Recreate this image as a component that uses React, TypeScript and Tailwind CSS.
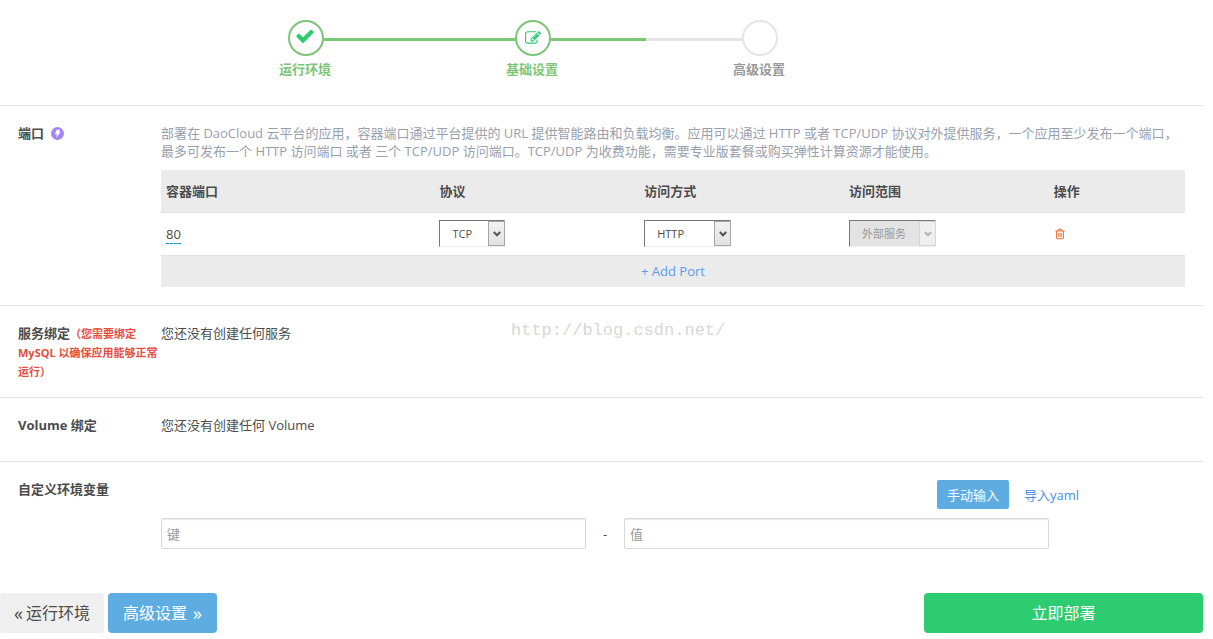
import { useState } from "react";
import clsx from "clsx";

const CHECK =
  "M1671 566q0 40-28 68l-724 724-136 136q-28 28-68 28t-68-28l-136-136-362-362q-28-28-28-68t28-68l136-136q28-28 68-28t68 28l294 295 656-657q28-28 68-28t68 28l136 136q28 28 28 68z";
const EDIT =
  "M888 1184l116-116-152-152-116 116v56h96v96h56zm440-720q-16-16-33 1l-350 350q-17 17-1 33t33-1l350-350q17-17 1-33zm80 594v190q0 119-84.5 203.5t-203.5 84.5h-832q-119 0-203.5-84.5t-84.5-203.5v-832q0-119 84.5-203.5t203.5-84.5h832q63 0 117 25 15 7 18 23 3 17-9 29l-49 49q-14 14-32 8-23-6-45-6h-832q-66 0-113 47t-47 113v832q0 66 47 113t113 47h832q66 0 113-47t47-113v-126q0-13 9-22l64-64q15-15 35-7t20 29zm-96-738l288 288-672 672h-288v-288zm444 132l-92 92-288-288 92-92q28-28 68-28t68 28l152 152q28 28 28 68t-28 68z";
const TRASH =
  "M704 736v576q0 14-9 23t-23 9h-64q-14 0-23-9t-9-23v-576q0-14 9-23t23-9h64q14 0 23 9t9 23zm256 0v576q0 14-9 23t-23 9h-64q-14 0-23-9t-9-23v-576q0-14 9-23t23-9h64q14 0 23 9t9 23zm256 0v576q0 14-9 23t-23 9h-64q-14 0-23-9t-9-23v-576q0-14 9-23t23-9h64q14 0 23 9t9 23zm128 724v-948h-896v948q0 22 7 40.5t14.5 27 10.5 8.5h832q3 0 10.5-8.5t14.5-27 7-40.5zm-672-1076h448l-48-117q-7-9-17-11h-317q-10 2-17 11zm928 32v64q0 14-9 23t-23 9h-96v948q0 83-47 143.5t-113 60.5h-832q-66 0-113-58.5t-47-141.5v-952h-96q-14 0-23-9t-9-23v-64q0-14 9-23t23-9h309l70-167q15-37 54-63t79-26h320q40 0 79 26t54 63l70 167h309q14 0 23 9t9 23z";

function Icon({ path, className }: { path: string; className: string }) {
  return (
    <svg viewBox="0 0 1792 1792" fill="currentColor" className={className} aria-hidden="true">
      <path d={path} />
    </svg>
  );
}

const steps = [
  { name: "运行环境", icon: CHECK, iconClass: "size-5 mb-1 mr-0.5", reached: true },
  { name: "基础设置", icon: EDIT, iconClass: "size-4", reached: true },
  { name: "高级设置", icon: null, iconClass: "", reached: false },
];

function Steps() {
  return (
    <ol className="ml-[16%] flex w-full max-w-[681px] pt-5 pb-[27px]">
      {steps.map((step, i) => {
        const line = step.reached ? "bg-[#7cc576]" : "bg-[#e5e5e5]";
        return (
          <li key={step.name} className="flex-1">
            <div className="flex items-start">
              <span className={clsx("mt-[18px] h-[3px] flex-1", i > 0 && line)} />
              <span
                className={clsx(
                  "flex size-9 items-center justify-center rounded-full border-2 text-[#2ecc71]",
                  step.reached ? "border-[#7cc576]" : "border-[#e5e5e5]"
                )}
              >
                {step.icon && <Icon path={step.icon} className={step.iconClass} />}
              </span>
              <span
                className={clsx("mt-[18px] h-[3px] flex-1", i < steps.length - 1 && line)}
              />
            </div>
            <p
              className={clsx(
                "mt-1 pr-0.5 text-center font-bold",
                step.reached ? "text-[#7cc576]" : "text-[#999]"
              )}
            >
              {step.name}
            </p>
          </li>
        );
      })}
    </ol>
  );
}

function Section({ label, children }: { label: React.ReactNode; children?: React.ReactNode }) {
  return (
    <section className="flex min-h-16 border-t border-[#e6e6e9] px-[18px] pt-[18px] pb-4">
      <h2 className="w-[143px] shrink-0 font-bold">{label}</h2>
      <div className="min-w-0 flex-1">{children}</div>
    </section>
  );
}

function Picker({
  label,
  options,
  className,
  disabled,
}: {
  label: string;
  options: string[];
  className: string;
  disabled?: boolean;
}) {
  return (
    <div className={clsx("relative h-[27px]", className)}>
      <select
        aria-label={label}
        disabled={disabled}
        className={clsx(
          "size-full appearance-none border border-t-[#777] border-r-[#eee] border-b-[#eee] border-l-[#777] pl-3 text-[11px]",
          disabled ? "bg-[#e3e3e3] text-[#999]" : "bg-white"
        )}
      >
        {options.map((o) => (
          <option key={o}>{o}</option>
        ))}
      </select>
      <span
        className={clsx(
          "pointer-events-none absolute top-px right-0 bottom-px flex w-[17px] items-center justify-center border",
          disabled
            ? "border-[#d5d5d5] bg-[#efefef] text-[#b5b5b5]"
            : "border-[#a5a5a5] bg-linear-to-b from-[#f2f2f2] to-[#e2e2e2] text-[#555]"
        )}
      >
        <svg viewBox="0 0 8 6" className="h-[6px] w-2" fill="none" stroke="currentColor" strokeWidth="2">
          <path d="M0.8 1 L4 4.3 L7.2 1" />
        </svg>
      </span>
    </div>
  );
}

function PortTable() {
  return (
    <table className="mt-[10px] mb-0.5 w-full table-fixed border-collapse text-left">
      <thead>
        <tr className="h-[42px] border-b border-[#e1e1e1] bg-[#ebebeb]">
          <th className="w-[26.7%] px-[5px]">容器端口</th>
          <th className="w-[20%] px-[5px]">协议</th>
          <th className="w-[20%] px-[5px]">访问方式</th>
          <th className="w-[20%] px-[5px]">访问范围</th>
          <th className="px-[5px]">操作</th>
        </tr>
      </thead>
      <tbody>
        <tr className="h-[43px] border-b border-[#e1e1e1]">
          <td className="px-[5px]">
            <a href="#port" className="border-b border-dashed border-[#0088cc]">
              80
            </a>
          </td>
          <td className="px-[5px]">
            <Picker label="协议" options={["TCP", "UDP"]} className="w-[66px]" />
          </td>
          <td className="px-[5px]">
            <Picker label="访问方式" options={["HTTP", "TCP"]} className="w-[87px]" />
          </td>
          <td className="px-[5px]">
            <Picker label="访问范围" options={["外部服务"]} className="w-[87px]" disabled />
          </td>
          <td className="px-[5px]">
            <button aria-label="删除" className="block text-[#e8682a]">
              <Icon path={TRASH} className="size-3" />
            </button>
          </td>
        </tr>
        <tr className="h-8 bg-[#ebebeb]">
          <td colSpan={5} className="text-center">
            <button className="text-[#5d9cec]">+ Add Port</button>
          </td>
        </tr>
      </tbody>
    </table>
  );
}

const modes = ["手动输入", "导入yaml"];

function EnvVars() {
  const [mode, setMode] = useState(modes[0]);
  const field =
    "h-[31px] w-[425px] min-w-0 shrink rounded-xs border border-[#d9d9d9] px-[5px] shadow-[inset_0_1px_1px_rgba(0,0,0,0.08)] placeholder:text-[#999]";
  return (
    <>
      <div className="flex justify-end gap-[5px] pr-24">
        {modes.map((m) => (
          <button
            key={m}
            onClick={() => setMode(m)}
            className={clsx(
              "h-[29px] rounded-xs px-[10px]",
              mode === m ? "bg-[#5dade2] text-white" : "text-[#4a90e2]"
            )}
          >
            {m}
          </button>
        ))}
      </div>
      <div className="mt-[9px] flex items-center">
        <input aria-label="键" placeholder="键" className={field} />
        <span className="w-[38px] shrink-0 text-center">-</span>
        <input aria-label="值" placeholder="值" className={field} />
      </div>
    </>
  );
}

function App() {
  return (
    <div className="relative bg-white pr-[10px] font-['Open_Sans','Noto_Sans_CJK_SC',sans-serif] text-[13px] leading-[18px] text-[#4c4c4c]">
      <Steps />
      <Section
        label={
          <span className="flex items-center gap-[7px]">
            端口
            <svg viewBox="0 0 13 13" className="size-[13px]" aria-hidden="true">
              <circle cx="6.5" cy="6.5" r="6.5" fill="#a585f0" />
              <path d="M5.6 2.8h3.6L8.3 5.3h1.2L5.2 10.8 6 7.2H4z" fill="#fff" />
            </svg>
          </span>
        }
      >
        <p className="text-[#98a0ad]">
          部署在 DaoCloud 云平台的应用，容器端口通过平台提供的 URL 提供智能路由和负载均衡。应用可以通过 HTTP 或者
          TCP/UDP 协议对外提供服务，一个应用至少发布一个端口，最多可发布一个 HTTP 访问端口 或者 三个 TCP/UDP
          访问端口。TCP/UDP 为收费功能，需要专业版套餐或购买弹性计算资源才能使用。
        </p>
        <PortTable />
      </Section>
      <Section
        label={
          <>
            服务绑定
            <small className="text-[11px] text-[#e74c3c]">（您需要绑定 MySQL 以确保应用能够正常运行）</small>
          </>
        }
      >
        您还没有创建任何服务
      </Section>
      <Section label="Volume 绑定">您还没有创建任何 Volume</Section>
      <Section label="自定义环境变量">
        <EnvVars />
      </Section>

      <div className="mt-7 flex gap-1 pb-[7px] text-base">
        <button className="flex h-10 items-center gap-[3px] rounded bg-[#efefef] px-[14px]">
          <span className="text-lg">«</span>
          <span>运行环境</span>
        </button>
        <button className="flex h-10 items-center gap-[6px] rounded bg-[#5dade2] px-[15px] text-white">
          <span>高级设置</span>
          <span className="text-lg">»</span>
        </button>
        <button className="ml-auto h-10 w-[279px] rounded bg-[#2ecc71] text-white">立即部署</button>
      </div>

      <span className="pointer-events-none absolute top-[322px] left-[511px] font-['Liberation_Mono',monospace] text-[17px] text-[#d8d8d4]">
        http://blog.csdn.net/
      </span>
    </div>
  );
}

export default App;
